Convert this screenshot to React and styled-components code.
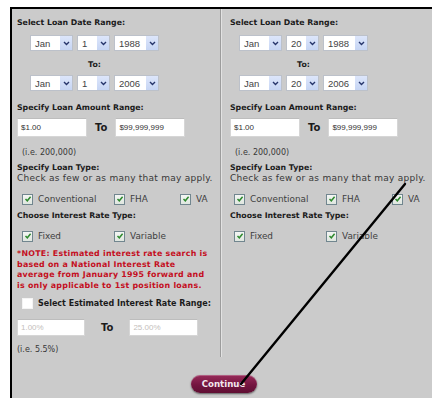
import React from "react";
import styled, { createGlobalStyle } from "styled-components";

const GlobalStyle = createGlobalStyle`
  html, body { margin: 0; padding: 0; background: #ffffff; }
  body { font-family: "DejaVu Sans", Verdana, sans-serif; width: 432px; height: 400px; overflow: hidden; position: relative; }
`;

const Frame = styled.div`
  margin: 7px 0 0 10px;
  border-top: 2px solid #000;
  border-left: 2px solid #000;
  background: #cbcbcb;
  height: 391px;
  box-sizing: border-box;
  display: flex;
  flex-direction: column;
`;

const Columns = styled.div`
  display: grid;
  grid-template-columns: 208px 2px 1fr;
  height: 348px;
`;

const Divider = styled.div`
  background: #9c9c9c;
  box-shadow: 1px 0 0 #e2e2e2;
  width: 1px;
`;

const Column = styled.div`
  padding: 8px 0 0 ${(p) => p.$pad}px;
  display: flex;
  flex-direction: column;
  align-items: flex-start;
`;

const Heading = styled.div`
  font-size: 7.8px;
  line-height: 11px;
  font-weight: bold;
  color: #1b1b1b;
  margin-top: ${(p) => p.$mt || 0}px;
  white-space: nowrap;
`;

const Plain = styled.div`
  font-size: ${(p) => p.$size || 9}px;
  letter-spacing: ${(p) => p.$ls || 0}px;
  line-height: 11px;
  color: #383838;
  white-space: nowrap;
  margin-top: ${(p) => p.$mt || 0}px;
  padding-left: ${(p) => p.$pl || 0}px;
`;

const DateBlock = styled.div`
  margin-left: ${(p) => p.$ml}px;
  display: flex;
  flex-direction: column;
  align-items: center;
`;

const SelectRow = styled.div`
  display: flex;
  gap: 4px;
  margin-top: ${(p) => p.$mt}px;
`;

const SelectBox = styled.div`
  width: ${(p) => p.$w}px;
  height: 16px;
  box-sizing: border-box;
  border: 1px solid #bcc1ca;
  background: #fff;
  display: flex;
  align-items: center;
  justify-content: space-between;
  font-family: "Liberation Sans", Arial, sans-serif;
  font-size: 9.5px;
  color: #444;
  padding-left: 4px;
`;

const Arrow = styled.span`
  width: 12px;
  height: 14px;
  background: linear-gradient(#dde6fb, #c6d5f4);
  display: flex;
  align-items: center;
  justify-content: center;
`;

const ToLabel = styled.div`
  font-size: 7.8px;
  line-height: 11px;
  font-weight: bold;
  color: #1b1b1b;
  margin-top: 8px;
`;

const AmountRow = styled.div`
  display: flex;
  align-items: center;
  gap: ${(p) => p.$gap}px;
  margin-top: ${(p) => p.$mt}px;
`;

const TextBox = styled.div`
  width: ${(p) => p.$w}px;
  height: ${(p) => p.$h}px;
  box-sizing: border-box;
  border: 1px solid #d6d6d6;
  border-top-color: #bdbdbd;
  background: #fff;
  font-family: "Liberation Sans", Arial, sans-serif;
  font-size: 8px;
  color: ${(p) => (p.$faded ? "#c4c0bc" : "#333")};
  display: flex;
  align-items: center;
  padding-left: 3px;
`;

const ToWord = styled.span`
  font-size: ${(p) => p.$size}px;
  font-weight: bold;
  color: #1b1b1b;
`;

const CheckRow = styled.div`
  display: grid;
  grid-template-columns: 92px 66px auto;
  margin-top: ${(p) => p.$mt}px;
  padding-left: ${(p) => p.$pl}px;
  height: 12px;
  align-items: center;
`;

const CheckItem = styled.label`
  display: flex;
  align-items: center;
  gap: 5px;
  font-size: 8.9px;
  color: #404040;
  white-space: nowrap;
`;

const Box = styled.span`
  width: 11px;
  height: 11px;
  box-sizing: border-box;
  border: 1px solid ${(p) => (p.$on ? "#71868f" : "#f4f4f4")};
  background: ${(p) => (p.$on ? "linear-gradient(#f4f6f4, #dfe6df)" : "#fff")};
  display: flex;
  align-items: center;
  justify-content: center;
  flex: none;
`;

const Note = styled.div`
  margin-top: 7px;
  font-size: 7.9px;
  letter-spacing: 0.25px;
  line-height: 10.5px;
  font-weight: bold;
  color: #c40f22;
  white-space: nowrap;
`;

const RangeCheck = styled.div`
  display: flex;
  align-items: center;
  gap: 5px;
  margin-top: 6px;
  padding-left: 5px;
  height: 12px;
  font-size: 8px;
  font-weight: bold;
  color: #1b1b1b;
  white-space: nowrap;
`;

const Footer = styled.div`
  display: flex;
  justify-content: center;
  padding-top: 18px;
`;

const Button = styled.button`
  width: 66px;
  height: 18px;
  border: none;
  border-radius: 9px;
  background: linear-gradient(#982b5a, #741540 55%, #5f0f33);
  box-shadow: 0 1px 2px rgba(0, 0, 0, 0.55), inset 0 1px 0 rgba(255, 255, 255, 0.25);
  color: #f3e8ee;
  font-family: "DejaVu Sans", Verdana, sans-serif;
  font-size: 8.6px;
  font-weight: bold;
  padding: 0;
  margin-left: 3px;
`;

const Pointer = styled.svg`
  position: absolute;
  left: 0;
  top: 0;
  pointer-events: none;
`;

const Chevron = () => (
  <svg width="7" height="5" viewBox="0 0 7 5">
    <path d="M1 1 L3.5 3.5 L6 1" fill="none" stroke="#26356b" strokeWidth="1.4" />
  </svg>
);

const Tick = () => (
  <svg width="8" height="8" viewBox="0 0 8 8">
    <path d="M1.5 4 L3.3 5.8 L6.6 1.8" fill="none" stroke="#2f8a2f" strokeWidth="1.5" />
  </svg>
);

const Select = ({ w, value }) => (
  <SelectBox $w={w}>
    <span>{value}</span>
    <Arrow>
      <Chevron />
    </Arrow>
  </SelectBox>
);

const Check = ({ label, on = true }) => (
  <CheckItem>
    <Box $on={on}>{on && <Tick />}</Box>
    {label}
  </CheckItem>
);

const SearchColumn = ({ day, pad, dateIndent, boxPad, children }) => (
  <Column $pad={pad}>
    <Heading>Select Loan Date Range:</Heading>
    <DateBlock $ml={dateIndent}>
      <SelectRow $mt={7}>
        <Select w={43} value="Jan" />
        <Select w={33} value={day} />
        <Select w={45} value="1988" />
      </SelectRow>
      <ToLabel>To:</ToLabel>
      <SelectRow $mt={5}>
        <Select w={43} value="Jan" />
        <Select w={33} value={day} />
        <Select w={45} value="2006" />
      </SelectRow>
    </DateBlock>
    <Heading $mt={11}>Specify Loan Amount Range:</Heading>
    <AmountRow $gap={8} $mt={5}>
      <TextBox $w={70} $h={19}>$1.00</TextBox>
      <ToWord $size={10}>To</ToWord>
      <TextBox $w={70} $h={19}>$99,999,999</TextBox>
    </AmountRow>
    <Plain $mt={10} $pl={5} $size={8}>(i.e. 200,000)</Plain>
    <Heading $mt={4}>Specify Loan Type:</Heading>
    <Plain $ls={0.25}>Check as few or as many that may apply.</Plain>
    <CheckRow $mt={9} $pl={boxPad}>
      <Check label="Conventional" />
      <Check label="FHA" />
      <Check label="VA" />
    </CheckRow>
    <Heading $mt={5}>Choose Interest Rate Type:</Heading>
    <CheckRow $mt={9} $pl={boxPad}>
      <Check label="Fixed" />
      <Check label="Variable" />
    </CheckRow>
    {children}
  </Column>
);

export default function App() {
  return (
    <>
      <GlobalStyle />
      <Frame>
        <Columns>
          <SearchColumn day="1" pad={5} dateIndent={13} boxPad={5}>
            <Note>
              *NOTE: Estimated interest rate search is
              <br />
              based on a National Interest Rate
              <br />
              average from January 1995 forward and
              <br />
              is only applicable to 1st position loans.
            </Note>
            <RangeCheck>
              <Box />
              Select Estimated Interest Rate Range:
            </RangeCheck>
            <AmountRow $gap={16} $mt={10}>
              <TextBox $w={68} $h={17} $faded>1.00%</TextBox>
              <ToWord $size={10}>To</ToWord>
              <TextBox $w={69} $h={17} $faded>25.00%</TextBox>
            </AmountRow>
            <Plain $mt={8} $size={8}>(i.e. 5.5%)</Plain>
          </SearchColumn>
          <Divider />
          <SearchColumn day="20" pad={8} dateIndent={9} boxPad={4} />
        </Columns>
        <Footer>
          <Button>Continue</Button>
        </Footer>
      </Frame>
      <Pointer width="432" height="400" viewBox="0 0 432 400">
        <line x1="405" y1="184" x2="241" y2="384" stroke="#000" strokeWidth="2.4" strokeLinecap="round" />
      </Pointer>
    </>
  );
}
